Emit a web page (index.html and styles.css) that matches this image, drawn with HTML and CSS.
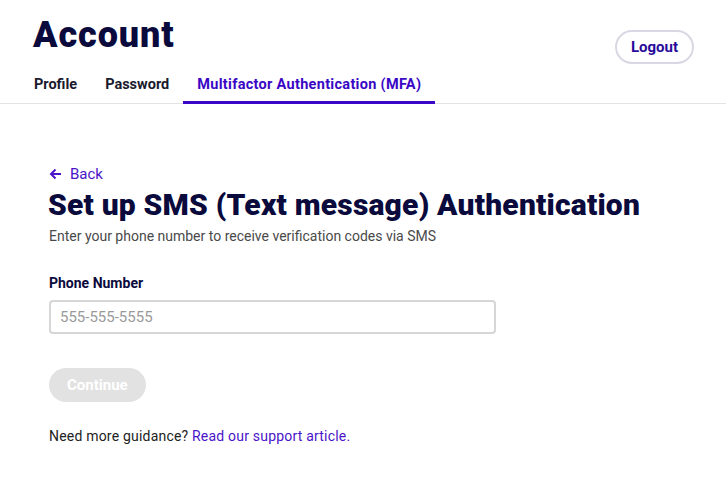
FILE: index.html
```html
<!DOCTYPE html>
<html lang="en">
<head>
<meta charset="utf-8">
<title>Account</title>
<link rel="stylesheet" href="styles.css">
</head>
<body>
<header class="header">
  <div class="header-top">
    <h1 class="title">Account</h1>
    <button class="logout">Logout</button>
  </div>
  <nav class="tabs">
    <a class="tab">Profile</a>
    <a class="tab">Password</a>
    <a class="tab active">Multifactor Authentication (MFA)</a>
  </nav>
</header>
<main class="main">
  <a class="back">
    <svg width="13" height="12" viewBox="0 0 13 12" aria-hidden="true"><path d="M12 6H2M6.5 1.5 2 6l4.5 4.5" fill="none" stroke="currentColor" stroke-width="2"/></svg>
    <span>Back</span>
  </a>
  <h2 class="heading">Set up SMS (Text message) Authentication</h2>
  <p class="sub">Enter your phone number to receive verification codes via SMS</p>
  <label class="label" for="phone">Phone Number</label>
  <input class="input" id="phone" type="text" placeholder="555-555-5555">
  <button class="continue" disabled>Continue</button>
  <p class="help">Need more guidance? <a class="link">Read our support article.</a></p>
</main>
</body>
</html>
```
FILE: styles.css
```css
* { box-sizing: border-box; }
body {
  margin: 0;
  font-family: Roboto, "Liberation Sans", sans-serif;
  color: #0b0b3b;
  background: #fff;
}
.header {
  border-bottom: 1px solid #e3e3e3;
}
.header-top {
  display: flex;
  justify-content: space-between;
  align-items: flex-start;
  padding: 13px 32px 0 33px;
  height: 69px;
}
.title {
  margin: 0;
  font-size: 36px;
  font-weight: 900;
  letter-spacing: 0.9px;
  line-height: 44px;
  color: #0a0a3d;
}
.logout {
  margin-top: 17px;
  height: 34px;
  padding: 0 14px;
  border: 2px solid #d8d8e4;
  border-radius: 17px;
  background: #fff;
  font-family: inherit;
  font-size: 15px;
  font-weight: 700;
  color: #2a0a9a;
}
.tabs {
  display: flex;
  padding-left: 20px;
}
.tab {
  padding: 7px 14px 8px;
  font-size: 14.5px;
  font-weight: 700;
  letter-spacing: 0.3px;
  color: #1a1a2e;
  border-bottom: 3px solid transparent;
  margin-bottom: -1px;
}
.tab:first-child, .tab:nth-child(2) { letter-spacing: 0; }
.active {
  color: #3a07c6;
  border-bottom-color: #3a07c6;
}
.main {
  padding: 61px 49px 0;
  display: flex;
  flex-direction: column;
  align-items: flex-start;
}
.back {
  display: flex;
  align-items: center;
  gap: 8px;
  color: #4b14c8;
  font-size: 15px;
  line-height: 18px;
}
.heading {
  margin: 4px 0 0 -1px;
  font-size: 30px;
  font-weight: 900;
  letter-spacing: 0.2px;
  line-height: 36px;
  color: #0a0a3d;
}
.sub {
  margin: 5px 0 0;
  font-size: 14px;
  color: #4a4a4a;
}
.label {
  margin-top: 31px;
  font-size: 14px;
  font-weight: 700;
  color: #0a0a3d;
}
.input {
  margin-top: 9px;
  width: 447px;
  height: 34px;
  border: 2px solid #d6d6d6;
  border-radius: 4px;
  padding: 0 9px;
  font-family: inherit;
  font-size: 15px;
}
.input::placeholder { color: #9a9a9a; }
.continue {
  margin-top: 34px;
  height: 34px;
  padding: 0 18px;
  border: none;
  border-radius: 17px;
  background: #e2e2e2;
  color: #fff;
  font-family: inherit;
  font-size: 15px;
  font-weight: 700;
}
.help {
  margin: 26px 0 0;
  font-size: 14px;
  letter-spacing: 0.2px;
  color: #222;
}
.link { color: #4b14c8; }
```
